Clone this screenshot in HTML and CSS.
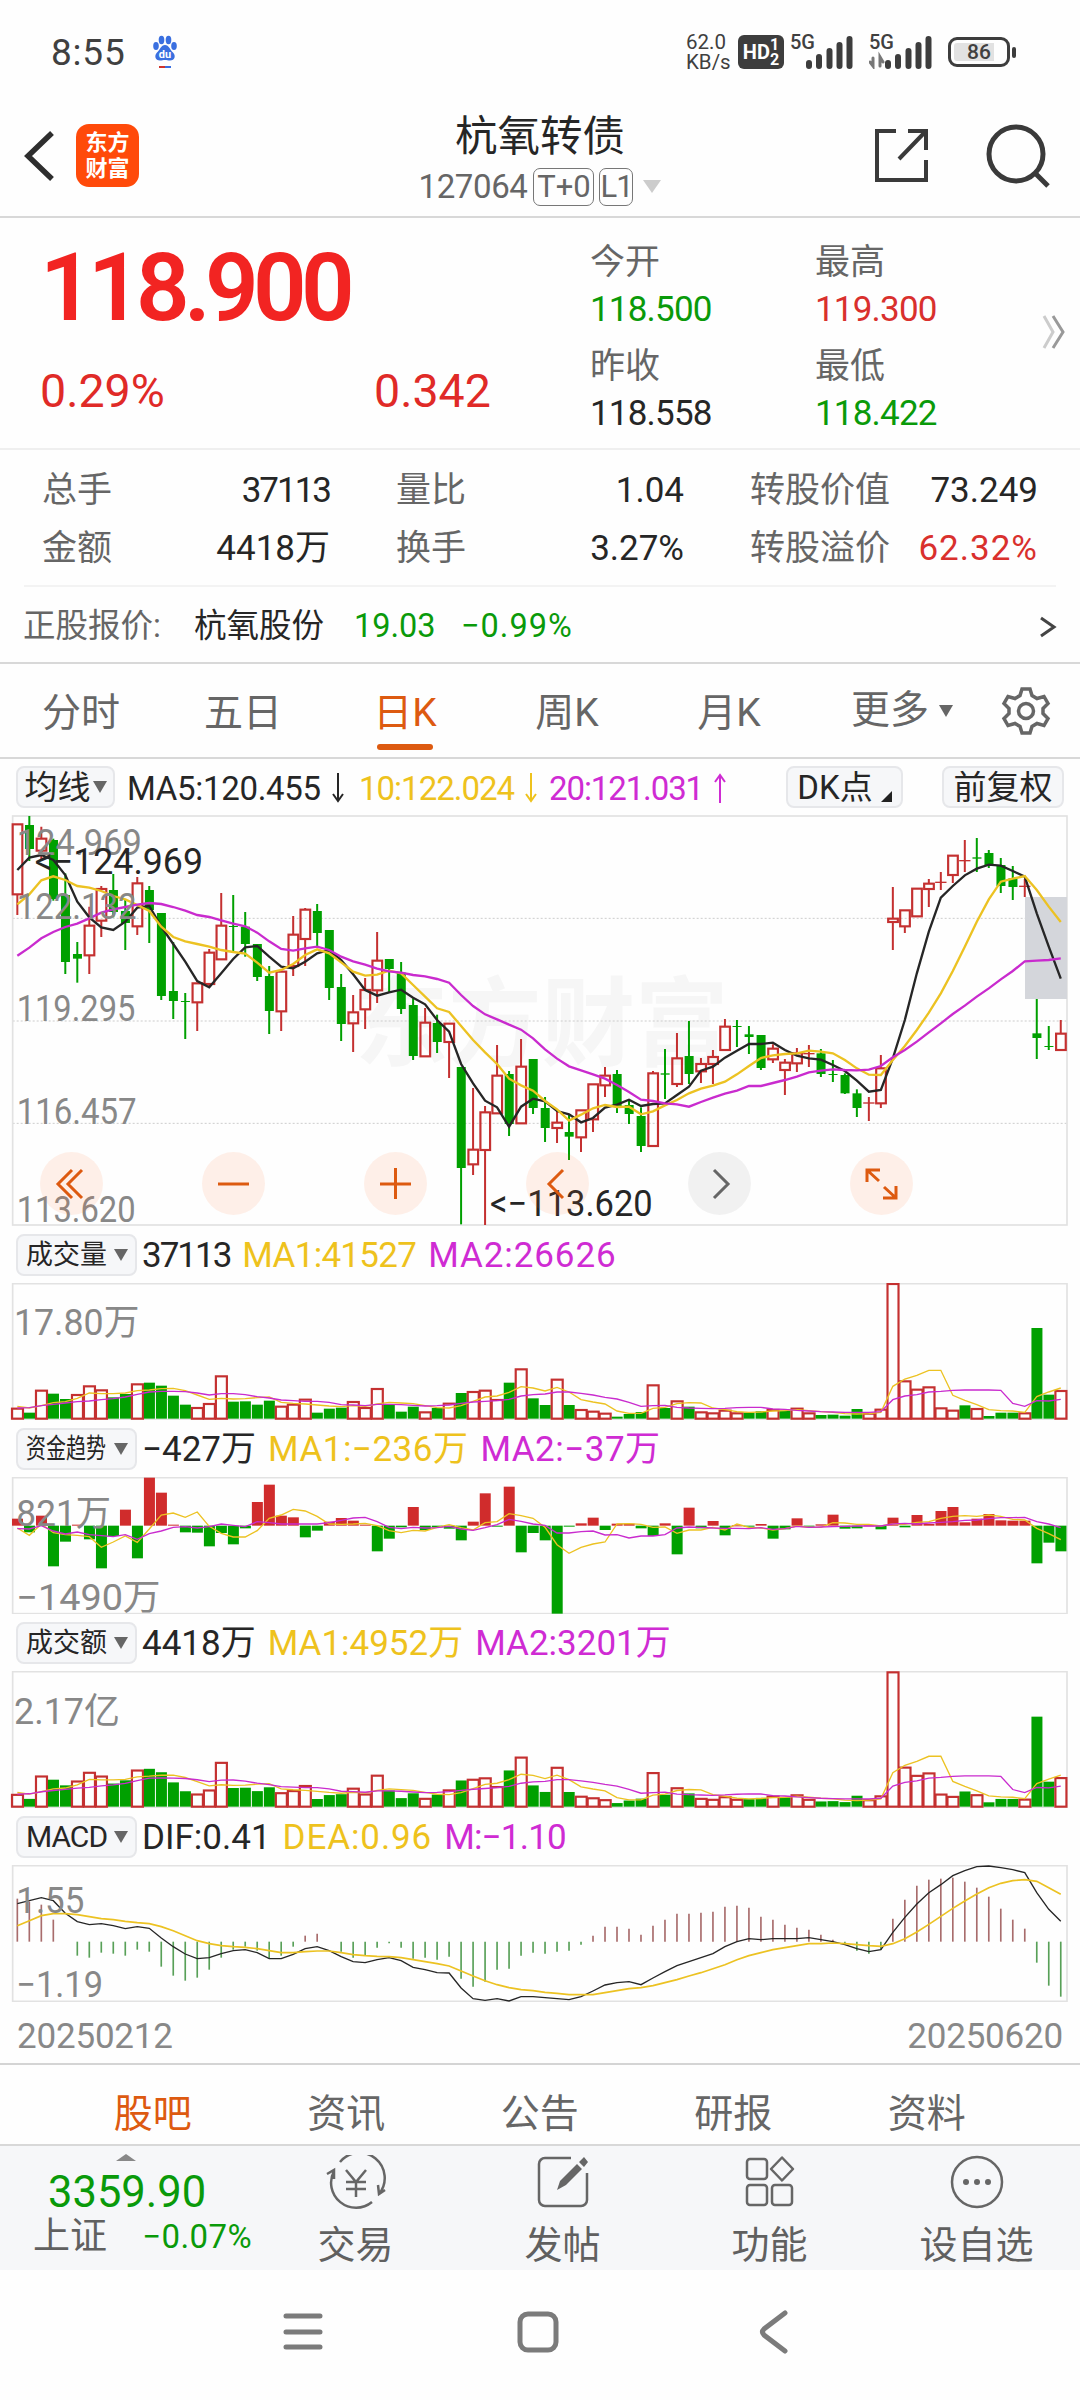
FILE: index.html
```html
<!DOCTYPE html>
<html lang="zh-CN">
  <head>
    <meta charset="UTF-8" />
    <meta name="viewport" content="width=device-width, initial-scale=1.0" />
    <title>杭氧转债 127064</title>
    <link rel="stylesheet" href="styles.css">
  </head>
  <body>
    <!-- Status bar -->
    <div class="status">
      <span class="clock">8:55</span>
      <svg class="paw" viewBox="0 0 26 34">
        <g fill="#3a6fe0">
          <ellipse cx="4" cy="11" rx="2.8" ry="4" />
          <ellipse cx="9.5" cy="5" rx="2.8" ry="4.2" />
          <ellipse cx="16.5" cy="5" rx="2.8" ry="4.2" />
          <ellipse cx="22" cy="11" rx="2.8" ry="4" />
          <path d="M13 10c4 0 5 5 8 7.500c3 3 2 8-3 8c-2 0-3-.5-5-.5s-3 .5-5 .5c-5 0-6-5-3-8c3-2.500 4-7.500 8-7.500z" />
        </g>
        <text x="13" y="23" font-size="11" font-weight="700" fill="#fff" text-anchor="middle">du</text>
        <path d="M7 32h6" stroke="#d0342c" stroke-width="2" />
        <path d="M13 32h6" stroke="#3a6fe0" stroke-width="2" />
      </svg>
      <div class="status-right">
        <div class="speed"><span>62.0</span><span>KB/s</span></div>
        <div class="hd">HD<span><i>1</i><i>2</i></span></div>
        <div class="signal">
          <span>5G</span>
          <svg viewBox="0 0 64 34"><path d="M19 31v-3M29 31v-9M39.500 31v-15M49.500 31v-21M59.500 31v-27" /></svg>
        </div>
        <div class="signal">
          <span>5G</span>
          <svg viewBox="0 0 64 34"><path d="M19 31v-3M29 31v-9M39.500 31v-15M49.500 31v-21M59.500 31v-27" /><path class="thin" d="M1 27l3 4v-8M11 31v-9l3 5" /></svg>
        </div>
        <div class="battery"><b>86</b></div>
      </div>
    </div>

    <!-- Title bar -->
    <header class="header">
      <div class="header-left">
        <svg class="back" viewBox="0 0 34 54"><path d="M29 4L5 27l24 23" /></svg>
        <div class="logo"><span>东方</span><span>财富</span></div>
      </div>
      <div class="header-title">
        <h1>杭氧转债</h1>
        <div class="code"><span class="num">127064</span><span class="tag">T+0</span><span class="tag tag-l1">L1</span><i class="tri-down"></i></div>
      </div>
      <div class="header-right">
        <svg class="share" viewBox="0 0 56 56"><path d="M22 4H3v49h49V33M34 4h18v19M52 4L25 32" /></svg>
        <svg class="search" viewBox="0 0 66 66"><circle cx="30" cy="30" r="27" /><path d="M49 49l13 13" /></svg>
      </div>
    </header>

    <!-- Quote -->
    <section class="quote">
      <div class="quote-main">
        <div class="price">118.900</div>
        <div class="change"><span>0.29%</span><span>0.342</span></div>
      </div>
      <div class="quote-grid">
        <div><label>今开</label><span class="down">118.500</span></div>
        <div><label>最高</label><span class="up">119.300</span></div>
        <div><label>昨收</label><span>118.558</span></div>
        <div><label>最低</label><span class="down">118.422</span></div>
      </div>
      <svg class="more" viewBox="0 0 24 36"><path d="M2 2l9 16l-9 16" stroke="#ccc" /><path d="M11 2l10 16l-10 16" stroke="#999" /></svg>
    </section>

    <section class="stats">
      <div class="stat"><label>总手</label><span class="tight">37113</span></div>
      <div class="stat"><label>量比</label><span>1.04</span></div>
      <div class="stat"><label>转股价值</label><span>73.249</span></div>
      <div class="stat"><label>金额</label><span>4418万</span></div>
      <div class="stat"><label>换手</label><span>3.27%</span></div>
      <div class="stat"><label>转股溢价</label><span class="up loose">62.32%</span></div>
    </section>

    <section class="underlying">
      <label>正股报价:</label>
      <span class="u-name">杭氧股份</span>
      <span class="u-price down">19.03</span>
      <span class="loose down">−0.99%</span>
      <svg viewBox="0 0 18 22"><path d="M2 2l13 9l-13 9" /></svg>
    </section>

    <!-- Period tabs -->
    <nav class="tabs">
      <a>分时</a>
      <a>五日</a>
      <a class="active">日K</a>
      <a>周K</a>
      <a>月K</a>
      <a class="tab-more">更多<i class="caret"></i></a>
      <svg class="gear" viewBox="0 0 50 50">
        <path d="M21 3h8l2 6.500l5 3l7-2l4 7l-5 5v5l5 5l-4 7l-7-2l-5 3l-2 6.500h-8l-2-6.500l-5-3l-7 2l-4-7l5-5v-5l-5-5l4-7l7 2l5-3z" />
        <circle cx="25" cy="25" r="7.500" />
      </svg>
    </nav>

    <div class="ma-row">
      <span class="chip chip-ma">均线<i class="caret"></i></span>
      <span class="ma ma-a">MA5:120.455<svg viewBox="0 0 14 32"><path d="M7 1v28M2 22l5 7l5-7" /></svg></span>
      <span class="ma ma-b yellow">10:122.024<svg viewBox="0 0 14 32"><path d="M7 1v28M2 22l5 7l5-7" /></svg></span>
      <span class="ma ma-c magenta">20:121.031<svg viewBox="0 0 14 32"><path d="M7 31V3M2 10l5-7l5 7" /></svg></span>
      <span class="chip chip-dk">DK点<i></i></span>
      <span class="chip chip-fq">前复权</span>
    </div>

    <div class="kchart">
      <svg id="kline" viewBox="0 15 3240 1233"></svg>
      <div class="controls">
        <button><svg viewBox="0 0 63 63"><path d="M32 18L18 32l14 14M42 18L28 32l14 14" /></svg></button>
        <button><svg viewBox="0 0 63 63"><path d="M16 32h31" /></svg></button>
        <button><svg viewBox="0 0 63 63"><path d="M16 32h31M31.500 16v31" /></svg></button>
        <button><svg viewBox="0 0 63 63"><path d="M37 18L23 32l14 14" /></svg></button>
        <button class="disabled"><svg viewBox="0 0 63 63"><path d="M26 18l14 14l-14 14" /></svg></button>
        <button><svg viewBox="0 0 63 63"><path d="M17 30V18h13M17 18l12 11M46 34v12H33M46 46L34 35" /></svg></button>
      </div>
    </div>

    <div class="sub-row sub-row-vol">
      <span class="chip"><b>成交量</b><i class="caret"></i></span>
      <span class="tight">37113</span><span class="yellow">MA1:41527</span><span class="magenta">MA2:26626</span>
    </div>
    <svg class="sub" id="volume" viewBox="0 157 3240 411"></svg>

    <div class="sub-row sub-row-flow">
      <span class="chip"><b class="narrow">资金趋势</b><i class="caret"></i></span>
      <span>−427万</span><span class="yellow">MA1:−236万</span><span class="magenta">MA2:−37万</span>
    </div>
    <svg class="sub" id="flow" viewBox="0 739 3240 411"></svg>

    <div class="sub-row">
      <span class="chip"><b>成交额</b><i class="caret"></i></span>
      <span>4418万</span><span class="yellow">MA1:4952万</span><span class="magenta">MA2:3201万</span>
    </div>
    <svg class="sub" id="turnover" viewBox="0 121 3240 411"></svg>

    <div class="sub-row sub-row-macd">
      <span class="chip"><b class="latin">MACD</b><i class="caret"></i></span>
      <span>DIF:0.41</span><span class="yellow">DEA:0.96</span><span class="magenta">M:−1.10</span>
    </div>
    <svg class="sub" id="macd" viewBox="0 703 3240 411"></svg>

    <div class="dates"><span>20250212</span><span>20250620</span></div>

    <nav class="info-tabs">
      <a class="active">股吧</a>
      <a>资讯</a>
      <a>公告</a>
      <a>研报</a>
      <a>资料</a>
    </nav>

    <footer class="toolbar">
      <div class="index">
        <i class="tri-up"></i>
        <strong>3359.90</strong>
        <div><span>上证</span><em>−0.07%</em></div>
      </div>
      <a>
        <svg viewBox="0 0 60 54">
          <path d="M14 7a25 25 0 0 1 39 32M46 47a25 25 0 0 1-38-31M1 19l7-4v9M59 35l-6 4l-1-9" />
          <path d="M20 15l10 12l10-12M30 27v15M20 27h20M20 34h20" />
        </svg>交易</a>
      <a>
        <svg viewBox="0 0 60 54">
          <path d="M38 3H12a6 6 0 0 0-6 6v36a6 6 0 0 0 6 6h36a6 6 0 0 0 6-6V18" />
          <path class="solid" d="M24 35l3-9L44 9l5 5L33 30zM46 7l5-5l4 5l-4 5z" />
        </svg>发帖</a>
      <a>
        <svg viewBox="0 0 60 54">
          <rect x="7" y="4" width="20" height="20" rx="3" />
          <rect x="7" y="30" width="20" height="20" rx="3" />
          <rect x="32" y="30" width="20" height="20" rx="3" />
          <path d="M42 2.500l11 11.500l-11 11.500l-11-11.500z" stroke-linejoin="round" />
        </svg>功能</a>
      <a>
        <svg viewBox="0 0 60 54">
          <circle cx="30" cy="27" r="25" />
          <g class="dots"><circle cx="19" cy="27" r="3" /><circle cx="30" cy="27" r="3" /><circle cx="41" cy="27" r="3" /></g>
        </svg>设自选</a>
    </footer>

    <!-- Android navigation -->
    <div class="navbar">
      <svg viewBox="0 0 44 44"><path d="M5 6h34M5 22h34M5 37h34" /></svg>
      <svg viewBox="0 0 44 44"><rect x="4" y="4" width="36" height="36" rx="8" /></svg>
      <svg viewBox="0 0 44 44"><path d="M34 3L13 19q-3 3 0 6l21 16" /></svg>
    </div>

    <script src="chart.js"></script>
  </body>
</html>
```
FILE: styles.css
```css
:root {
  --red: #c9302c;
  --green: #0a9a0a;
  --orange: #dd5a10;
  --yellow: #eec21d;
  --magenta: #cf2bd3;
  --gray: #666;
  --line: #d8d8d8;
}

* {
  margin: 0;
  padding: 0;
  box-sizing: border-box;
}

body {
  width: 1080px;
  height: 2400px;
  overflow: hidden;
  background: #fefefe;
  color: #262626;
  font-family: Roboto, "Noto Sans CJK SC", sans-serif;
  font-size: 35px;
  line-height: 1;
}

svg {
  display: block;
  fill: none;
}

i,
em {
  font-style: normal;
}

.up {
  color: #d9302d;
}

.down {
  color: var(--green);
}

.yellow {
  color: var(--yellow);
}

.magenta {
  color: var(--magenta);
}

/* Status bar */
.status {
  height: 104px;
  display: flex;
  align-items: center;
  padding: 0 70px 0 51px;
  color: #404040;
}

.clock {
  width: 101px;
  font-size: 37px;
  letter-spacing: 0.8px;
}

.paw {
  width: 26px;
  height: 34px;
}

.status-right {
  margin-left: auto;
  display: flex;
  align-items: center;
}

.speed {
  display: flex;
  flex-direction: column;
  width: 52px;
  font-size: 20.5px;
  line-height: 20px;
}

.hd {
  width: 46px;
  height: 34px;
  margin-right: 6px;
  border-radius: 6px;
  background: #3d3d3d;
  color: #fff;
  font-size: 20px;
  font-weight: 700;
  display: flex;
  align-items: center;
  justify-content: center;
}

.hd span {
  display: flex;
  flex-direction: column;
  font-size: 16px;
  line-height: 15px;
}

.signal {
  position: relative;
  width: 64px;
  margin-right: 15px;
}

.signal span {
  position: absolute;
  left: 0;
  top: -3px;
  font-size: 20px;
  font-weight: 500;
}

.signal svg {
  width: 64px;
  height: 34px;
  stroke: #3d3d3d;
  stroke-width: 6;
  stroke-linecap: round;
}

.signal .thin {
  stroke-width: 3;
  stroke: #777;
}

.battery {
  position: relative;
  width: 62px;
  height: 30px;
  padding: 3px;
  border: 3px solid #3d3d3d;
  border-radius: 9px;
  background: linear-gradient(90deg, #e2e2e2 80%, #fefefe 80%) content-box;
  display: flex;
  align-items: center;
  justify-content: center;
}

.battery b {
  font-size: 21px;
  font-weight: 500;
}

.battery::after {
  content: "";
  position: absolute;
  right: -9px;
  top: 7px;
  width: 4px;
  height: 11px;
  border-radius: 2px;
  background: #3d3d3d;
}

/* Title bar */
.header {
  height: 114px;
  border-bottom: 2px solid var(--line);
  display: flex;
  justify-content: space-between;
}

.header-left,
.header-right {
  width: 260px;
  display: flex;
  padding-top: 20px;
}

.back {
  width: 34px;
  height: 54px;
  margin: 5px 19px 0 23px;
  stroke: #2e2e2e;
  stroke-width: 5.5;
}

.logo {
  width: 63px;
  height: 63px;
  border-radius: 13px;
  background: #ff4a0a;
  color: #fff;
  font-size: 22px;
  font-weight: 700;
  display: flex;
  flex-direction: column;
  align-items: center;
  justify-content: center;
  gap: 4px;
}

.header-title {
  display: flex;
  flex-direction: column;
  align-items: center;
}

.header-title h1 {
  margin-top: 12px;
  font-size: 42.5px;
  font-weight: 400;
}

.code {
  margin-top: 9px;
  display: flex;
  align-items: center;
  color: var(--gray);
  font-size: 33px;
}

.num {
  letter-spacing: -0.4px;
  margin-right: 6px;
}

.tag {
  width: 61px;
  height: 38px;
  margin-right: 5px;
  border: 1.5px solid #777;
  border-radius: 7px;
  font-size: 31px;
  line-height: 35px;
  text-align: center;
}

.tag-l1 {
  width: 34px;
  letter-spacing: -1px;
  margin-right: 10px;
}

.tri-down {
  border: 9.5px solid transparent;
  border-top: 13px solid #ccc;
  border-bottom: 0;
}

.share,
.search {
  stroke: #3a3a3a;
  stroke-width: 4;
}

.share {
  width: 56px;
  height: 56px;
  margin: 3px 0 0 54px;
}

.search {
  width: 66px;
  height: 66px;
  margin-left: 56px;
  stroke-width: 5;
}

/* Quote */
.quote {
  height: 232px;
  border-bottom: 2px solid #efefef;
  display: flex;
}

.quote-main {
  width: 590px;
  padding: 23px 0 0 40px;
  color: #e02a27;
}

.price {
  font-size: 94px;
  font-weight: 600;
  letter-spacing: -5.7px;
  color: #f22422;
}

.change {
  display: flex;
  margin-top: 33px;
  font-size: 46.5px;
}

.change span {
  flex: none;
  width: 334px;
}

.quote-grid {
  width: 450px;
  padding-top: 27px;
  display: grid;
  grid-template-columns: 225px 225px;
  grid-auto-rows: 104px;
}

.quote-grid div {
  display: flex;
  flex-direction: column;
  gap: 12px;
}

.quote-grid span {
  font-size: 35px;
  letter-spacing: -0.8px;
}

label {
  color: var(--gray);
}

.more {
  width: 24px;
  height: 36px;
  margin: 96px 0 0 2px;
  stroke-width: 3;
}

.stats {
  height: 137px;
  margin: 0 24px;
  padding: 23px 17px 0 18px;
  border-bottom: 2px solid #f3f3f3;
  display: grid;
  grid-template-columns: 288px 288px 288px;
  column-gap: 66px;
  grid-auto-rows: 58px;
}

.stat {
  display: flex;
  justify-content: space-between;
  line-height: 35px;
}

.tight {
  letter-spacing: -2px;
}

.loose {
  letter-spacing: 1px;
}

.underlying {
  height: 77px;
  border-bottom: 2px solid var(--line);
  padding: 4px 23px 0;
  display: flex;
  align-items: center;
  font-size: 32.5px;
}

.underlying label {
  width: 171px;
}

.u-name {
  width: 160px;
}

.u-price {
  width: 107px;
}

.underlying svg {
  width: 18px;
  height: 22px;
  margin-left: auto;
  stroke: #444;
  stroke-width: 3;
}

/* Period tabs */
.tabs {
  height: 95px;
  border-bottom: 2px solid var(--line);
  display: flex;
  align-items: center;
  color: var(--gray);
  font-size: 39px;
}

.tabs a {
  position: relative;
  width: 162px;
  height: 93px;
  text-align: center;
  line-height: 99px;
}

.tabs .active,
.info-tabs .active {
  color: var(--orange);
}

.tabs .active::after {
  content: "";
  position: absolute;
  left: 53px;
  bottom: 7px;
  width: 56px;
  height: 6px;
  border-radius: 3px;
  background: var(--orange);
}

.tabs .tab-more {
  width: 152px;
  padding-left: 41px;
  display: flex;
  align-items: center;
  white-space: nowrap;
}

.caret {
  display: block;
  border: 7px solid transparent;
  border-top: 12px solid #666;
  border-bottom: 0;
}

.tab-more .caret {
  margin-left: 10px;
}

.gear {
  width: 50px;
  height: 50px;
  margin-left: 39px;
  stroke: var(--gray);
  stroke-width: 3.5;
}

/* Moving averages */
.ma-row {
  height: 56px;
  padding: 0 16px;
  display: flex;
  align-items: center;
  font-size: 33px;
}

.chip {
  height: 42px;
  border: 2px solid #e6e7ea;
  border-radius: 8px;
  background: #f6f7f9;
  display: flex;
  align-items: center;
  justify-content: center;
}

.chip-ma {
  width: 99px;
  margin-right: 12px;
}

.chip-ma .caret {
  margin-left: 2px;
}

.ma {
  display: flex;
  align-items: center;
  padding-top: 2px;
  letter-spacing: -0.3px;
}

.ma svg {
  width: 14px;
  height: 32px;
  margin-left: 10px;
  stroke: currentColor;
  stroke-width: 2;
}

.ma-a {
  width: 232px;
}

.ma-b {
  width: 190px;
  letter-spacing: -1px;
}

.ma-c {
  letter-spacing: -1.1px;
}

.chip-dk {
  width: 117px;
  margin-left: auto;
  margin-right: 39px;
}

.chip-dk i {
  align-self: flex-end;
  margin: 0 0 4px 8px;
  border-left: 11px solid transparent;
  border-bottom: 11px solid #222;
}

.chip-fq {
  width: 122px;
}

/* Charts */
.kchart {
  position: relative;
}

#kline {
  width: 1080px;
  height: 411px;
}

.sub {
  width: 1080px;
  height: 137px;
}

.controls {
  position: absolute;
  left: 40px;
  top: 337px;
  display: flex;
  gap: 99px;
}

.controls button {
  width: 63px;
  height: 63px;
  border: 0;
  border-radius: 50%;
  background: rgba(255, 110, 40, 0.1);
}

.controls svg {
  stroke: var(--orange);
  stroke-width: 3;
}

.controls .disabled {
  background: rgba(0, 0, 0, 0.05);
}

.controls .disabled svg {
  stroke: #666;
}

.sub-row {
  height: 57px;
  padding: 1px 16px 0;
  display: flex;
  align-items: center;
  gap: 12px;
  white-space: nowrap;
}

.sub-row .chip {
  width: 121px;
  margin-right: -7px;
  letter-spacing: 0;
  justify-content: flex-start;
  padding-left: 8px;
}

.sub-row-vol .yellow {
  letter-spacing: -0.7px;
}

.sub-row-vol .magenta {
  letter-spacing: 0.9px;
}

.sub-row-flow .yellow,
.sub-row-flow .magenta {
  letter-spacing: 0.5px;
}

.sub-row-macd .yellow {
  letter-spacing: 0.9px;
}

.sub-row-macd .magenta {
  letter-spacing: -0.8px;
}

.chip b {
  width: 79px;
  font-size: 27px;
  font-weight: 400;
}

.chip .narrow {
  font-size: 27px;
  transform: scaleX(0.74);
  transform-origin: left;
}

.chip .latin {
  font-size: 30px;
  letter-spacing: -1px;
}

.sub-row .caret {
  margin-left: 9px;
}

.sub text,
#kline text {
  fill: #262626;
  font-size: 108px;
}

.sub .axis,
#kline .axis {
  fill: #888;
}

#kline .watermark {
  fill: #f6f6f6;
  font-size: 290px;
  font-weight: 700;
}

.frame {
  stroke: #e2e2e2;
  stroke-width: 5;
}

.dates {
  height: 63px;
  padding: 8px 17px 0;
  border-bottom: 2px solid #d4d4d4;
  display: flex;
  align-items: center;
  justify-content: space-between;
  color: #888;
  letter-spacing: -0.2px;
}

.info-tabs {
  height: 81px;
  padding: 0 56px;
  border-bottom: 2px solid var(--line);
  display: flex;
  color: var(--gray);
  font-size: 39px;
  line-height: 99px;
}

.info-tabs a {
  width: 193.5px;
  text-align: center;
}

/* Bottom toolbar */
.toolbar {
  height: 124px;
  background: #f6f7f9;
  display: flex;
  color: #606060;
}

.index {
  width: 252px;
  display: flex;
  flex-direction: column;
}

.tri-up {
  align-self: center;
  margin-top: 8px;
  border: 10px solid transparent;
  border-bottom: 7px solid #888;
  border-top: 0;
}

.index strong {
  margin: 10px 0 0 48px;
  font-size: 43.5px;
  font-weight: 400;
  color: var(--green);
}

.index div {
  margin: 3px 0 0 33px;
  display: flex;
  justify-content: space-between;
  align-items: center;
  font-size: 37px;
}

.index em {
  font-size: 33px;
  letter-spacing: 0.4px;
  color: var(--green);
}

.toolbar a {
  width: 207px;
  display: flex;
  flex-direction: column;
  align-items: center;
  gap: 17px;
  padding-top: 9px;
  font-size: 38px;
}

.toolbar svg {
  width: 60px;
  height: 54px;
  stroke: #666;
  stroke-width: 2.5;
}

.toolbar .solid,
.dots {
  fill: #666;
  stroke: none;
}

.navbar {
  display: flex;
  padding: 40px 0 0 281px;
  gap: 191px;
}

.navbar svg {
  width: 44px;
  height: 44px;
  stroke: #7b7b7b;
  stroke-width: 5;
  stroke-linecap: round;
}
```
FILE: chart.js
```js
const RED = "#c43030";
const GREEN = "#00a000";
const BLACK = "#262626";
const YELLOW = "#ecc222";
const MAGENTA = "#c92bce";

// all canvases use 3 units per css pixel
const STEP = 35.98;
const xAt = (i) => 52 + i * STEP;
const list = (s) => s.trim().split(/[\s,]+/).map(Number);

// color, high, body top, body bottom, low
const candles = `
r 43 43 253 315|g 18 45 117 153|r 50 86 122 150|g 86 90 267 272|g 190 255 456 492|g 396 432 446 518
r 290 347 436 492|r 228 237 332 381|g 192 240 306 322|g 270 303 339 420|r 201 220 349 375|g 228 240 300 399
g 309 309 558 570|g 396 543 573 627|g 549 573 576 687|r 520 520 577 663|r 417 428 522 532|r 249 347 448 448
g 255 348 351 425|g 306 350 402 440|g 402 402 501 513|g 468 498 603 672|r 478 485 604 663|r 318 374 468 498
r 294 299 387 468|g 282 303 369 410|g 360 360 534 570|g 492 531 642 693|r 555 607 640 726|r 504 540 598 657
r 366 452 541 579|g 447 447 477 549|g 456 488 597 612|g 565 585 738 750|r 594 638 739 739|g 614 639 696 729
r 641 641 696 804|g 771 771 1074 1243|r 834 1019 1063 1095|r 888 907 1020 1245|r 705 797 910 910|g 783 792 942 978
r 687 770 940 940|g 747 747 894 912|g 861 894 954 996|r 903 938 954 999|g 914 966 980 1050|r 901 901 982 1026
r 823 823 928 966|r 771 797 826 861|g 780 792 890 909|g 870 885 912 942|g 892 918 1008 1026|r 783 790 1008 1008
g 717 790 794 867|r 669 745 822 831|g 633 738 792 822|r 744 762 784 819|r 720 741 762 822|r 627 650 720 720
g 630 648 651 711|g 648 673 681 732|g 675 675 774 780|r 703 716 748 759|r 747 758 780 855|r 714 730 760 786
r 705 729 733 771|g 717 730 792 801|g 750 792 795 816|g 790 795 850 852|g 838 850 894 921|r 861 877 881 933
r 735 775 880 894|r 231 326 336 420|r 301 301 349 369|r 236 236 319 319|r 207 221 237 291|r 186 215 219 240
r 137 137 195 219|r 90 150 154 186|g 84 142 146 186|g 120 129 165 174|g 144 165 228 249|g 168 205 231 270
r 207 227 231 261|g 567 670 684 747|g 648 708 711 720|r 630 671 720 720`
  .trim()
  .split(/[|\n]/)
  .map((c) => {
    const p = c.split(" ");
    return { up: p[0] === "r", high: +p[1], top: +p[2], bottom: +p[3], low: +p[4] };
  });

const ma5 = list(`180 143 135 150 195 275 322 352 360 335 293 288 350 402 455 513 532 490 447 412 408 440 470 475 455 430 420 450 493
540 557 547 539 563 583 630 665 762 820 872 892 950 890 866 874 903 913 937 924 893 884 869 888 882 880 855 830 782 770
743 722 702 702 698 720 737 745 749 765 783 812 845 840 745 630 490 365 263 228 196 176 164 167 183 200 310 410 506`);
const ma10 = list(`283 253 211 199 210 228 233 243 258 268 285 303 350 381 394 402 410 420 426 431 458 488 480 462 435 418 430 457 485
497 494 482 490 525 560 595 606 648 690 727 762 806 826 842 873 898 932 914 895 885 891 890 913 904 886 870 850 836 827
815 793 768 744 736 732 730 722 725 730 750 775 794 795 750 708 660 608 550 483 410 335 268 215 206 198 240 290 336`);
const ma20 = list(`437 413 385 366 351 341 325 308 298 291 284 279 282 291 302 315 321 331 341 349 368 394 417 422 415 410 420 440 454
464 476 484 488 495 499 507 518 555 588 613 628 644 659 685 718 746 769 781 793 806 825 846 869 873 880 883 890 876 863
851 842 828 828 819 810 800 787 782 778 780 781 779 768 742 720 695 667 640 612 587 560 535 508 483 454 452 450 445`);

const volColor = "rgrggrrrggrggggrrrggggrrrgggrrrgggrgrgrrrgrggrgrrrgggrgrgrrrrggrgrrggggrrrrrrrrgrgggrggr";
const vol = list(`534 546 480 489 505 493 467 479 500 490 461 456 465 495 522 532 520 437 513 512 522 510 528 522 507 546 534 531 514 532
475 520 543 528 545 532 519 487 484 480 508 456 416 503 523 447 523 538 543 549 558 550 544 464 532 512 528 545 548 540
548 546 542 538 540 534 548 553 552 555 535 549 537 160 452 477 470 533 540 524 535 556 546 546 548 292 492 481`);
const volMa1 = list(`527 532 525 516 513 503 487 489 489 487 480 478 474 473 480 493 506 503 505 504 501 499 515 518 520 523 526 528 525 527
520 515 517 519 525 531 532 525 512 499 496 485 468 472 481 470 484 507 514 520 541 548 548 533 530 519 516 517 532 537
543 545 544 541 540 537 540 543 545 549 550 549 545 467 445 434 419 419 494 509 522 537 540 541 545 498 484 472`);
const volMa2 = list(`532 531 525 521 517 513 511 507 504 499 491 484 482 482 483 487 493 489 489 492 498 502 508 510 512 512 515 522 523 525
521 521 522 524 526 525 523 518 514 512 510 506 496 492 490 484 484 488 493 500 505 515 527 525 524 530 532 533 534 533
531 530 530 535 536 539 541 543 544 545 545 545 543 507 496 492 484 482 479 478 478 478 479 518 527 510 511 506`);

const flow = list(`864 905 855 1007 933 882 926 1013 916 837 983 741 786 882 905 906 947 907 941 893 814 762 855 860 920 900 873 862 870 882
962 924 890 829 898 890 894 929 873 788 888 768 965 907 929 1149 888 878 861 898 879 879 893 916 878 971 831 893 871 914
884 888 880 924 896 863 888 881 852 894 893 884 896 861 890 853 880 841 829 875 864 850 869 870 870 998 936 962`);
const flowMa1 = list(`892 914 880 906 912 914 918 950 934 916 935 895 853 847 860 844 887 908 919 919 900 863 853 836 841 857 880 881 880 878
885 900 906 899 901 890 882 891 898 876 873 849 855 863 890 942 968 950 940 934 880 879 881 890 889 908 898 898 890 898
880 890 892 898 894 886 890 890 876 877 881 881 886 880 881 875 873 863 857 855 857 853 857 866 868 893 909 927`);
const flowMa2 = list(`894 895 885 901 910 904 912 915 918 912 926 909 901 890 888 892 888 880 884 888 873 876 880 880 880 880 876 869 862 860
873 890 894 890 892 891 887 895 899 891 882 866 872 880 884 907 907 903 901 913 912 922 916 916 912 892 889 890 892 893
893 894 891 896 894 887 890 889 888 887 886 886 886 880 878 880 877 875 873 869 868 864 861 861 860 873 880 891`);

const hist = list(`804 813 822 867 933 975 981 966 969 975 957 963 1008 1035 1050 1041 1017 981 957 948 960 984 975 948 915 909 933 963 981 975
951 938 951 984 981 987 978 1044 1068 1053 1017 1014 975 966 969 963 960 942 915 888 888 894 912 885 867 849 849 846 843 828
825 831 858 867 882 891 897 912 927 942 960 969 957 864 807 765 747 744 741 753 771 798 834 867 894 996 1065 1098`);
const dif = list(`819 810 801 810 848 873 882 879 885 894 888 893 922 948 970 984 981 969 960 957 966 984 984 971 954 948 960 978 993 996
987 981 990 1010 1017 1026 1027 1072 1104 1109 1104 1111 1098 1098 1101 1104 1107 1098 1081 1063 1056 1053 1062 1042 1023 1005 993 981 969 948
933 924 927 924 924 924 921 927 933 942 954 963 957 905 860 820 786 762 735 720 708 706 711 717 726 786 836 872`);
const dea = list(`885 870 855 849 849 852 858 864 867 872 876 879 888 900 915 930 939 945 948 950 954 960 966 966 963 961 961 966 972 975
977 978 981 987 993 999 1006 1021 1036 1050 1062 1071 1077 1080 1085 1088 1092 1092 1092 1086 1080 1074 1071 1065 1056 1047 1036 1026 1014 1002
987 975 966 957 951 945 939 939 937 939 942 945 947 939 924 904 881 857 833 811 790 771 758 750 747 752 771 791`);

const rect = (x, y, w, h, attrs) => `<rect x="${x}" y="${y}" width="${w}" height="${h}" ${attrs}/>`;
const text = (x, y, len, cls, s) => `<text x="${x}" y="${y}" textLength="${len}" lengthAdjust="spacingAndGlyphs" class="${cls}">${s}</text>`;
const frame = (y, h) => rect(38, y, 3163, h, 'class="frame"');

function line(data, color, width) {
  const pts = data.map((y, i) => `${xAt(i).toFixed(1)},${y}`).join(" ");
  return `<polyline points="${pts}" stroke="${color}" stroke-width="${width}"/>`;
}

function drawKline() {
  let s = text(1065, 745, 1120, "watermark", "东方财富");
  [325, 633, 940].forEach((y) => {
    s += `<path d="M38 ${y}H3201" stroke="#ccc" stroke-width="3" stroke-dasharray="6 6"/>`;
  });
  s += frame(18, 1227);
  // gap zone
  s += rect(3075, 261, 126, 306, 'fill="#d4d6db"');
  candles.forEach((c, i) => {
    const x = xAt(i);
    const h = c.bottom - c.top;
    if (c.up && h > 5) {
      s += `<path d="M${x} ${c.high}V${c.top}M${x} ${c.bottom}V${c.low}" stroke="${RED}" stroke-width="6"/>`;
      s += rect(x - 14, c.top, 29, h, `stroke="${RED}" stroke-width="6.5"`);
    } else {
      const color = c.up ? RED : GREEN;
      s += `<path d="M${x} ${c.high}V${c.low}" stroke="${color}" stroke-width="6"/>`;
      s += rect(x - (c.up ? 17 : 13), c.top, c.up ? 34 : 27, h, `fill="${color}"`);
    }
  });
  s += line(ma5, BLACK, 7) + line(ma10, YELLOW, 7) + line(ma20, MAGENTA, 7);
  s += text(50, 135, 376, "axis", "124.969") + text(50, 327, 360, "axis", "122.132");
  s += text(50, 633, 356, "axis", "119.295") + text(50, 942, 360, "axis", "116.457");
  s += text(50, 1236, 357, "axis", "113.620");
  s += text(104, 191, 505, "", "&lt;−124.969") + text(1470, 1217, 488, "", "&lt;−113.620");
  document.getElementById("kline").innerHTML = s;
}

function drawBars(id, tops, base, top, line1, line2, label, len, labelY) {
  let s = frame(top, base - top + 3);
  tops.forEach((y, i) => {
    const x = xAt(i);
    if (volColor[i] === "r") {
      s += rect(x - 16, y, 33, Math.max(base - y, 3), `stroke="${RED}" stroke-width="6.5"`);
    } else {
      s += rect(x - 16, y, 33, base - y, `fill="${GREEN}"`);
    }
  });
  s += line(line1, YELLOW, 4) + line(line2, MAGENTA, 4);
  s += text(42, labelY, len, "axis", label);
  document.getElementById(id).innerHTML = s;
}

// turnover = volume weighted by the price of the day
function toTurnover(data) {
  return data.map((y, i) => {
    const mid = (candles[i].top + candles[i].bottom) / 2;
    const price = 124.969 - ((mid - 18) / 1227) * 11.349;
    return Math.max(125, 528 - ((564 - y) * price) / 122 - 5);
  });
}

function drawFlow() {
  let s = frame(741, 408);
  flow.forEach((y, i) => {
    const up = y < 885;
    s += rect(xAt(i) - 16, up ? y : 885, 33, Math.max(Math.abs(y - 885), 3), `fill="${up ? "#d02c2c" : GREEN}"`);
  });
  s += line(flowMa1, YELLOW, 4) + line(flowMa2, MAGENTA, 4);
  s += text(49, 885, 284, "axis", "821万") + text(49, 1138, 433, "axis", "−1490万");
  document.getElementById("flow").innerHTML = s;
}

function drawMacd() {
  let s = frame(705, 407);
  hist.forEach((y, i) => {
    if (y === 933) return;
    s += `<path d="M${xAt(i)} 933V${y}" stroke="${y < 933 ? "#a86c6c" : "#58a058"}" stroke-width="5"/>`;
  });
  s += line(dif, BLACK, 4) + line(dea, YELLOW, 5);
  s += text(49, 846, 204, "axis", "1.55") + text(49, 1099, 260, "axis", "−1.19");
  document.getElementById("macd").innerHTML = s;
}

drawKline();
drawBars("volume", vol, 564, 159, volMa1, volMa2, "17.80万", 376, 313);
drawFlow();
drawBars("turnover", toTurnover(vol), 528, 123, toTurnover(volMa1), toTurnover(volMa2), "2.17亿", 318, 281);
drawMacd();
```
